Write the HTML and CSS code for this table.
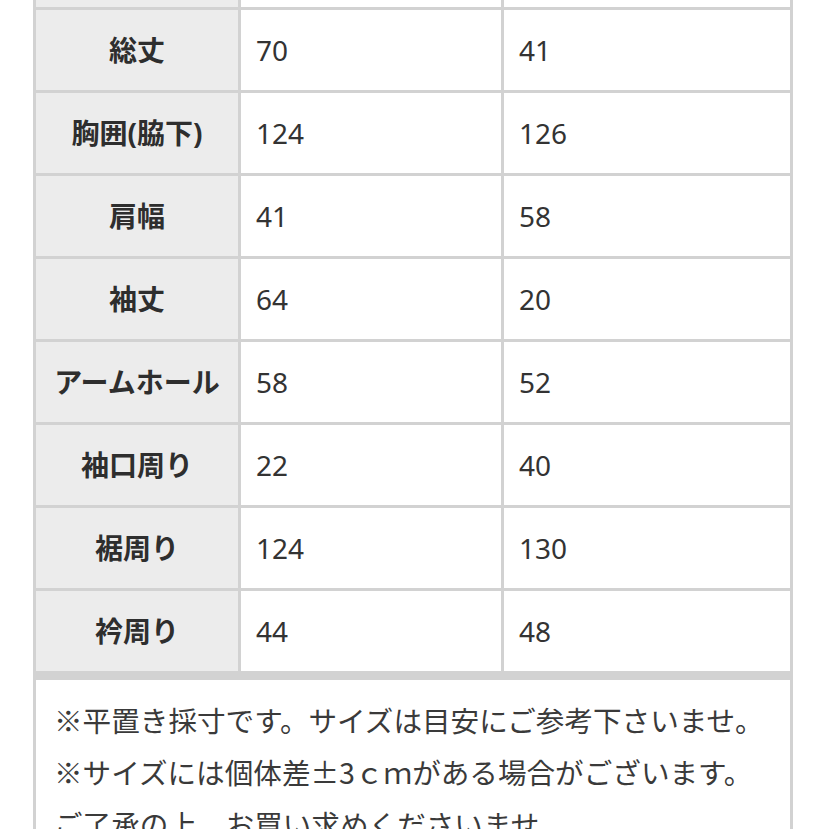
FILE: index.html
```html
<!DOCTYPE html>
<html lang="ja">
<head>
<meta charset="utf-8">
<title>サイズ表</title>
<link rel="stylesheet" href="styles.css">
</head>
<body>
<div class="wrap">
  <table class="size">
    <colgroup><col class="c1"><col class="c2"><col class="c3"></colgroup>
    <tbody>
      <tr class="cut"><th></th><td></td><td></td></tr>
      <tr><th>総丈</th><td>70</td><td>41</td></tr>
      <tr><th>胸囲(脇下)</th><td>124</td><td>126</td></tr>
      <tr><th>肩幅</th><td>41</td><td>58</td></tr>
      <tr><th>袖丈</th><td>64</td><td>20</td></tr>
      <tr><th>アームホール</th><td>58</td><td>52</td></tr>
      <tr><th>袖口周り</th><td>22</td><td>40</td></tr>
      <tr><th>裾周り</th><td>124</td><td>130</td></tr>
      <tr><th>衿周り</th><td>44</td><td>48</td></tr>
    </tbody>
  </table>
  <div class="note">
    <p>※平置き採寸です。サイズは目安にご参考下さいませ。</p>
    <p>※サイズには個体差±3ｃｍがある場合がございます。</p>
    <p>ご了承の上、お買い求めくださいませ。</p>
  </div>
</div>
</body>
</html>
```
FILE: styles.css
```css
html, body {
  margin: 0;
  padding: 0;
  background: #ffffff;
  overflow: hidden;
}
body {
  font-family: "Noto Sans", "Noto Sans CJK JP", sans-serif;
  color: #333333;
}
.wrap {
  margin-left: 33px;
  width: 760px;
  margin-top: -76px;
}
.size {
  width: 760px;
  border-collapse: separate;
  border-spacing: 0;
  table-layout: fixed;
  border-left: 3px solid #d2d2d2;
  border-top: 3px solid #d2d2d2;
}
.c1 { width: 205px; }
.c2 { width: 263px; }
.c3 { width: 289px; }
.size th, .size td {
  border-right: 3px solid #d2d2d2;
  border-bottom: 3px solid #d2d2d2;
  height: 80px;
  padding: 0;
  font-size: 28px;
  line-height: 1;
}
.size th {
  background: #ececec;
  font-weight: 700;
  text-align: center;
  color: #2e2e2e;
}
.size td {
  background: #ffffff;
  text-align: left;
  padding-left: 15px;
  font-weight: 400;
  color: #333333;
}
.note {
  border: 3px solid #d2d2d2;
  border-top: 6px solid #d2d2d2;
  padding: 14px 0 0 18px;
  height: 200px;
}
.note p {
  margin: 0;
  font-family: "Noto Sans CJK JP", "Noto Sans", sans-serif;
  font-size: 28.6px;
  line-height: 52px;
  white-space: nowrap;
  color: #3a3a3a;
}
```
